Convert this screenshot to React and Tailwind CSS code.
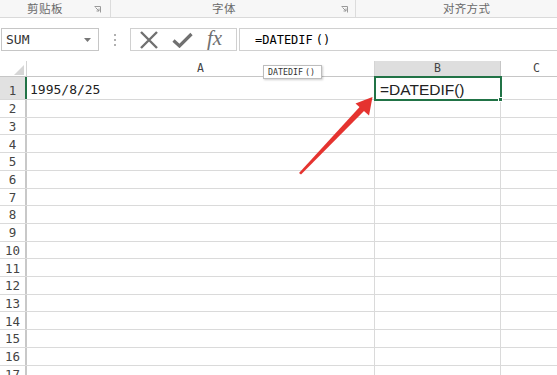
import React from "react";

const CJK = { fontFamily: '"Noto Sans CJK SC", "Noto Sans", sans-serif' };
const MONO = { fontFamily: '"DejaVu Sans Mono", "Liberation Mono", monospace' };

function Launcher() {
  return (
    <svg width="7" height="7" viewBox="0 0 7 7" className="shrink-0">
      <path d="M0.5 0.5H6.5V6.5" fill="none" stroke="#9a9a9a" strokeWidth="1" />
      <path d="M1.5 1.5L5 5M5 2.5V5H2.5" fill="none" stroke="#9a9a9a" strokeWidth="1" />
    </svg>
  );
}

const rowNums = Array.from({ length: 16 }, (_, i) => i + 2);

export default function App() {
  return (
    <div className="relative w-[557px] h-[375px] overflow-hidden bg-white">
      {/* Ribbon group labels */}
      <div className="flex h-[18px] bg-[#f7f7f7] border-b border-[#dadada] text-[11.5px] leading-none text-[#6a6a6a]" style={CJK}>
        <div className="flex shrink-0 items-center w-[111px] border-r border-[#dcdcdc] pl-[27px] pr-[9px]">
          <span className="tracking-[0.5px]">剪贴板</span>
          <span className="ml-auto mt-[2px]"><Launcher /></span>
        </div>
        <div className="flex shrink-0 items-center w-[245px] border-r border-[#dcdcdc] pl-[101px] pr-[7px]">
          <span className="tracking-[0.5px]">字体</span>
          <span className="ml-auto mt-[2px]"><Launcher /></span>
        </div>
        <div className="flex items-center flex-1 pl-[87px]">
          <span className="tracking-[0.3px]">对齐方式</span>
        </div>
      </div>

      {/* Formula bar */}
      <div className="flex items-start h-[43px] pt-[10px]">
        <div className="shrink-0 ml-[1px] w-[98px] h-[23px] border border-[#c6c6c6] flex items-center pl-[4px] pr-[7px]">
          <span className="text-[13px] text-[#333]" style={MONO}>SUM</span>
          <svg width="7" height="4" viewBox="0 0 7 4" className="ml-auto">
            <path d="M0 0H7L3.5 4Z" fill="#777" />
          </svg>
        </div>
        <div className="shrink-0 w-[31px] h-[23px] flex flex-col items-center justify-center gap-[3px]">
          <span className="w-[2px] h-[2px] bg-[#b0b0b0]" />
          <span className="w-[2px] h-[2px] bg-[#b0b0b0]" />
          <span className="w-[2px] h-[2px] bg-[#b0b0b0]" />
        </div>
        <div className="shrink-0 w-[107px] h-[23px] border border-[#d0d0d0] flex items-center pl-[8px]">
          <svg width="20" height="18" viewBox="0 0 20 18">
            <path d="M2 1L18 17M18 1L2 17" stroke="#707070" strokeWidth="2.4" fill="none" />
          </svg>
          <svg width="21" height="16" viewBox="0 0 21 16" className="ml-[13px]">
            <path d="M1.5 8.5L7.5 14L19.5 2" stroke="#707070" strokeWidth="3.2" fill="none" />
          </svg>
          <span className="ml-[14px] text-[21px] leading-none italic text-[#707070] -mt-[2px]" style={{ fontFamily: '"Liberation Serif", serif' }}>fx</span>
        </div>
        <div className="ml-[2px] flex-1 h-[23px] border border-r-0 border-[#d0d0d0] flex items-center pl-[15px]">
          <span className="text-[12px] text-black" style={MONO}>=DATEDIF<span className="ml-[3px]">()</span></span>
        </div>
      </div>

      {/* Column headers */}
      <div className="flex h-[16px] border-b border-[#c6c6c6] text-[11.5px] leading-none text-[#444]" style={MONO}>
        <div className="shrink-0 w-[27px] border-r border-[#d4d4d4] flex items-end justify-end pr-[2px] pb-[1px]">
          <svg width="10" height="10" viewBox="0 0 10 10">
            <path d="M10 0V10H0Z" fill="#d6d6d6" />
          </svg>
        </div>
        <div className="shrink-0 w-[348px] border-r border-[#d4d4d4] flex items-center justify-center">A</div>
        <div className="shrink-0 w-[126px] bg-[#dedede] border-r border-[#c6c6c6] flex items-center justify-center">B</div>
        <div className="shrink-0 w-[72px] border-r border-[#d4d4d4] flex items-center justify-center">C</div>
      </div>

      {/* Row 1 */}
      <div className="flex h-[23px] border-b border-[#d8d8d8]">
        <div className="shrink-0 w-[27px] bg-[#e1e1e1] border-r-2 border-[#217346] flex items-end justify-center pb-[2px] text-[12.5px] leading-none text-[#444]" style={MONO}>1</div>
        <div className="shrink-0 w-[348px] border-r border-[#dadada] flex items-end pl-[3px] pb-[3px] text-[13px] leading-none text-[#222]" style={MONO}>1995/8/25</div>
        <div className="shrink-0 w-[126px] border-r border-[#dadada] flex items-end pl-[5px] pb-[2px] text-[15.5px] leading-none text-[#222]" style={{ fontFamily: '"Liberation Sans", Arial, sans-serif' }}>=DATEDIF()</div>
        <div className="shrink-0 w-[72px] border-r border-[#dadada]" />
      </div>

      {rowNums.map((n) => (
        <div key={n} className="flex h-[17.71px] border-b border-[#dadada]">
          <div className="shrink-0 w-[27px] border-r-2 border-[#c8c8c8] flex items-end justify-center pb-[1px] text-[12.5px] leading-none text-[#444]" style={MONO}>{n}</div>
          <div className="shrink-0 w-[348px] border-r border-[#dadada]" />
          <div className="shrink-0 w-[126px] border-r border-[#dadada]" />
          <div className="shrink-0 w-[72px] border-r border-[#dadada]" />
        </div>
      ))}

      {/* Selection box on B1 */}
      <div className="absolute left-[374px] top-[76px] w-[128px] h-[25px] border-2 border-[#217346]" />
      <div className="absolute left-[498px] top-[97px] w-[5px] h-[5px] bg-[#217346] border border-white" />

      {/* Function tooltip */}
      <div className="absolute left-[263px] top-[65px] w-[59px] h-[14px] bg-white border border-[#bdbdbd] shadow-[1px_1px_2px_rgba(0,0,0,0.2)] flex items-center pl-[4px] text-[8.3px] leading-none text-[#333]" style={MONO}>
        DATEDIF<span className="ml-[2px]">()</span>
      </div>

      {/* Red arrow */}
      <svg className="absolute left-0 top-0 pointer-events-none" width="557" height="375" viewBox="0 0 557 375">
        <path d="M299 173 L360.5 106 L364.5 110.5 L301 174.5 Z" fill="#e5332f" />
        <path d="M372.5 97 L355.5 103.5 L369 115.5 Z" fill="#e5332f" />
      </svg>
    </div>
  );
}
